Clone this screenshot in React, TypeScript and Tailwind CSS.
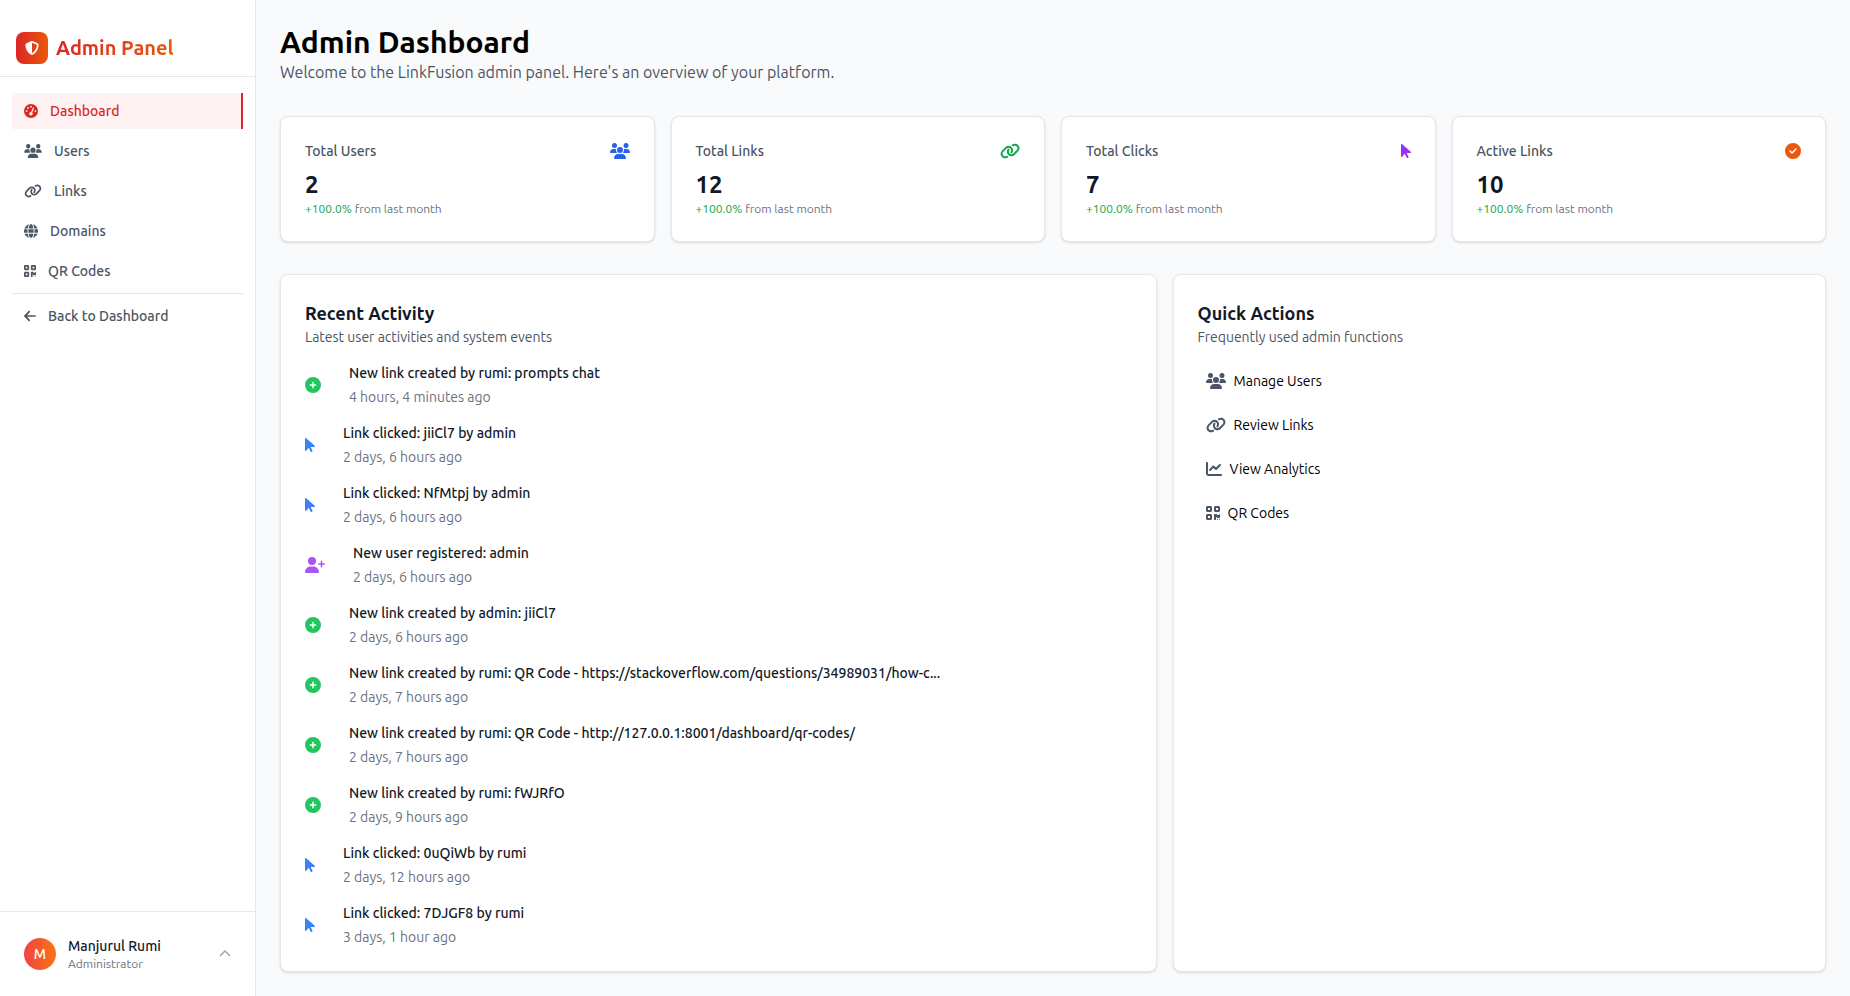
import type { IconType } from "react-icons";
import {
  FaArrowLeft,
  FaArrowPointer,
  FaChartLine,
  FaChevronUp,
  FaCircleCheck,
  FaCirclePlus,
  FaGaugeHigh,
  FaGlobe,
  FaLink,
  FaQrcode,
  FaShieldHalved,
  FaUserPlus,
  FaUsers,
} from "react-icons/fa6";

const navItems: { label: string; icon: IconType; size: string; active?: boolean }[] = [
  { label: "Dashboard", icon: FaGaugeHigh, size: "h-3.5 w-3.5", active: true },
  { label: "Users", icon: FaUsers, size: "h-3.5 w-4.5" },
  { label: "Links", icon: FaLink, size: "h-3.5 w-4.5" },
  { label: "Domains", icon: FaGlobe, size: "h-3.5 w-3.5" },
  { label: "QR Codes", icon: FaQrcode, size: "h-3.5 w-3" },
];

const stats: { label: string; value: string; icon: IconType; style: string }[] = [
  { label: "Total Users", value: "2", icon: FaUsers, style: "h-4 w-5 text-[#2563eb]" },
  { label: "Total Links", value: "12", icon: FaLink, style: "h-4 w-5 text-[#16a34a]" },
  { label: "Total Clicks", value: "7", icon: FaArrowPointer, style: "h-4 w-2.5 text-[#9333ea]" },
  { label: "Active Links", value: "10", icon: FaCircleCheck, style: "h-4 w-4 text-[#ea580c]" },
];

type ActivityKind = "created" | "clicked" | "registered";

const activityIcons: Record<ActivityKind, { icon: IconType; style: string }> = {
  created: { icon: FaCirclePlus, style: "h-4 w-4 shrink-0 text-[#22c55e]" },
  clicked: { icon: FaArrowPointer, style: "h-4 w-2.5 shrink-0 text-[#3b82f6]" },
  registered: { icon: FaUserPlus, style: "h-4 w-5 shrink-0 text-[#a855f7]" },
};

const activities: { kind: ActivityKind; title: string; time: string }[] = [
  { kind: "created", title: "New link created by rumi: prompts chat", time: "4 hours, 4 minutes ago" },
  { kind: "clicked", title: "Link clicked: jiiCl7 by admin", time: "2 days, 6 hours ago" },
  { kind: "clicked", title: "Link clicked: NfMtpj by admin", time: "2 days, 6 hours ago" },
  { kind: "registered", title: "New user registered: admin", time: "2 days, 6 hours ago" },
  { kind: "created", title: "New link created by admin: jiiCl7", time: "2 days, 6 hours ago" },
  {
    kind: "created",
    title: "New link created by rumi: QR Code - https://stackoverflow.com/questions/34989031/how-c...",
    time: "2 days, 7 hours ago",
  },
  {
    kind: "created",
    title: "New link created by rumi: QR Code - http://127.0.0.1:8001/dashboard/qr-codes/",
    time: "2 days, 7 hours ago",
  },
  { kind: "created", title: "New link created by rumi: fWJRfO", time: "2 days, 9 hours ago" },
  { kind: "clicked", title: "Link clicked: 0uQiWb by rumi", time: "2 days, 12 hours ago" },
  { kind: "clicked", title: "Link clicked: 7DJGF8 by rumi", time: "3 days, 1 hour ago" },
];

const quickActions: { label: string; icon: IconType; size: string }[] = [
  { label: "Manage Users", icon: FaUsers, size: "h-4 w-5" },
  { label: "Review Links", icon: FaLink, size: "h-4 w-5" },
  { label: "View Analytics", icon: FaChartLine, size: "h-4 w-4" },
  { label: "QR Codes", icon: FaQrcode, size: "h-4 w-3.5" },
];

const card = "rounded-lg border border-[#e5e7eb] bg-white p-6 shadow-sm";

function NavLink({
  label,
  icon: Icon,
  size,
  active,
}: {
  label: string;
  icon: IconType;
  size: string;
  active?: boolean;
}) {
  return (
    <a
      href="#"
      aria-current={active ? "page" : undefined}
      className={
        active
          ? "flex items-center gap-3 border-r-2 border-[#dc2626] bg-[#fef2f2] px-3 py-2 text-sm font-medium text-[#dc2626]"
          : "flex items-center gap-3 px-3 py-2 text-sm font-medium text-[#4b5563]"
      }
    >
      <Icon className={`shrink-0 ${size}`} aria-hidden />
      {label}
    </a>
  );
}

function Sidebar() {
  return (
    <aside className="sticky top-0 flex h-screen w-64 shrink-0 flex-col border-r border-[#e5e7eb] bg-white">
      <div className="flex items-center gap-2 border-b border-[#e5e7eb] px-4 pt-8 pb-3">
        <div className="flex size-8 items-center justify-center rounded-lg bg-linear-to-r/srgb from-[#dc2626] to-[#ea580c] text-white">
          <FaShieldHalved className="size-3.5" aria-hidden />
        </div>
        <span className="bg-linear-to-r/srgb from-[#dc2626] to-[#ea580c] bg-clip-text text-xl font-bold text-transparent">
          Admin Panel
        </span>
      </div>
      <nav className="flex-1 px-3 py-4">
        <div className="flex flex-col gap-1">
          {navItems.map((item) => (
            <NavLink key={item.label} {...item} />
          ))}
        </div>
        <div className="mt-1 border-t border-[#e5e7eb] pt-1">
          <NavLink label="Back to Dashboard" icon={FaArrowLeft} size="h-3.5 w-3" />
        </div>
      </nav>
      <div className="border-t border-[#e5e7eb] p-4">
        <button type="button" className="flex w-full items-center gap-3 p-2 text-left">
          <span className="flex size-8 items-center justify-center rounded-full bg-linear-to-r/srgb from-[#ef4444] to-[#f97316] text-sm font-medium text-white">
            M
          </span>
          <span className="flex-1">
            <span className="block text-sm font-medium text-[#111827]">Manjurul Rumi</span>
            <span className="block text-xs text-[#6b7280]">Administrator</span>
          </span>
          <FaChevronUp className="h-3.5 w-3 text-[#9ca3af]" aria-hidden />
        </button>
      </div>
    </aside>
  );
}

export default function App() {
  return (
    <div className="flex min-h-screen bg-[#f9fafb] font-['Ubuntu','Noto_Sans',sans-serif] text-black">
      <Sidebar />
      <main className="flex min-w-0 flex-1 flex-col gap-8 p-6">
        <header>
          <h1 className="text-3xl font-bold">Admin Dashboard</h1>
          <p className="text-[#4b5563]">
            Welcome to the LinkFusion admin panel. Here's an overview of your platform.
          </p>
        </header>

        <section className="grid gap-4 md:grid-cols-2 lg:grid-cols-4">
          {stats.map(({ label, value, icon: Icon, style }) => (
            <div key={label} className={card}>
              <div className="flex items-center justify-between pb-2">
                <h3 className="text-sm font-medium text-[#4b5563]">{label}</h3>
                <Icon className={style} aria-hidden />
              </div>
              <div className="text-2xl font-bold text-[#111827]">{value}</div>
              <p className="text-xs text-[#6b7280]">
                <span className="text-[#16a34a]">+100.0%</span> from last month
              </p>
            </div>
          ))}
        </section>

        <section className="grid gap-4 lg:grid-cols-7">
          <div className={`${card} lg:col-span-4`}>
            <h2 className="text-lg font-bold text-[#111827]">Recent Activity</h2>
            <p className="text-sm text-[#4b5563]">Latest user activities and system events</p>
            <ul className="mt-4 flex flex-col gap-4">
              {activities.map(({ kind, title, time }, i) => {
                const { icon: Icon, style } = activityIcons[kind];
                return (
                  <li key={i} className="flex items-center gap-7">
                    <Icon className={style} aria-hidden />
                    <div className="flex min-w-0 flex-col gap-1">
                      <p className="text-sm font-medium text-[#111827]">{title}</p>
                      <p className="text-sm text-[#6b7280]">{time}</p>
                    </div>
                  </li>
                );
              })}
            </ul>
          </div>

          <div className={`${card} lg:col-span-3`}>
            <h2 className="text-lg font-bold text-[#111827]">Quick Actions</h2>
            <p className="text-sm text-[#4b5563]">Frequently used admin functions</p>
            <div className="mt-4 flex flex-col gap-2">
              {quickActions.map(({ label, icon: Icon, size }) => (
                <a key={label} href="#" className="flex items-center gap-2 p-2 text-sm">
                  <Icon className={`shrink-0 text-[#4b5563] ${size}`} aria-hidden />
                  {label}
                </a>
              ))}
            </div>
          </div>
        </section>
      </main>
    </div>
  );
}
